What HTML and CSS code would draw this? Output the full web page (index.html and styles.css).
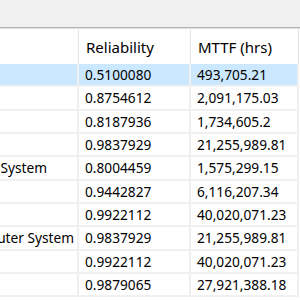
FILE: index.html
```html
<!DOCTYPE html>
<html>
<head>
<meta charset="utf-8">
<link rel="stylesheet" href="styles.css">
</head>
<body>
<div class="toolbar"></div>
<div class="viewport">
  <div class="grid">
    <div class="row head">
      <div class="cell c1"></div>
      <div class="cell c2">Reliability</div>
      <div class="cell c3">MTTF (hrs)</div>
    </div>
    <div class="row sel">
      <div class="cell c1"></div>
      <div class="cell c2">0.5100080</div>
      <div class="cell c3">493,705.21</div>
    </div>
    <div class="row">
      <div class="cell c1"></div>
      <div class="cell c2">0.8754612</div>
      <div class="cell c3">2,091,175.03</div>
    </div>
    <div class="row">
      <div class="cell c1"></div>
      <div class="cell c2">0.8187936</div>
      <div class="cell c3">1,734,605.2</div>
    </div>
    <div class="row">
      <div class="cell c1"></div>
      <div class="cell c2">0.9837929</div>
      <div class="cell c3">21,255,989.81</div>
    </div>
    <div class="row">
      <div class="cell c1">Radar System</div>
      <div class="cell c2">0.8004459</div>
      <div class="cell c3">1,575,299.15</div>
    </div>
    <div class="row">
      <div class="cell c1"></div>
      <div class="cell c2">0.9442827</div>
      <div class="cell c3">6,116,207.34</div>
    </div>
    <div class="row">
      <div class="cell c1"></div>
      <div class="cell c2">0.9922112</div>
      <div class="cell c3">40,020,071.23</div>
    </div>
    <div class="row">
      <div class="cell c1">Computer System</div>
      <div class="cell c2">0.9837929</div>
      <div class="cell c3">21,255,989.81</div>
    </div>
    <div class="row">
      <div class="cell c1"></div>
      <div class="cell c2">0.9922112</div>
      <div class="cell c3">40,020,071.23</div>
    </div>
    <div class="row">
      <div class="cell c1"></div>
      <div class="cell c2">0.9879065</div>
      <div class="cell c3">27,921,388.18</div>
    </div>
  </div>
</div>
</body>
</html>
```
FILE: styles.css
```css
html, body {
  margin: 0;
  padding: 0;
  background: #ffffff;
}
body {
  width: 300px;
  height: 300px;
  overflow: hidden;
  font-family: "Noto Sans", "Open Sans", sans-serif;
  font-size: 13.7px;
  color: #000000;
}
.toolbar {
  height: 27px;
  background: #f0f0f0;
  border-bottom: 1px solid #b4b4b4;
}
.viewport {
  border-top: 1px solid #dde2e8;
  overflow: hidden;
  width: 300px;
}
.grid {
  margin-left: -47px;
  width: 346px;
}
.row {
  display: flex;
  height: 23.333px;
  box-sizing: border-box;
  border-bottom: 2px solid #f0f0f0;
}
.row.head {
  height: 35px;
  border-bottom: none;
  font-size: 15px;
}
.row.sel {
  background: #cce8ff;
}
.cell {
  box-sizing: border-box;
  display: flex;
  align-items: center;
  padding-left: 6px;
  white-space: nowrap;
  overflow: hidden;
  border-right: 2px solid #f0f0f0;
}
.head .cell {
  padding-left: 7px;
  border-right: 1px solid #e5e5e5;
}
.c1 { width: 126px; }
.c2 { width: 112px; }
.c3 { width: 108px; }
```
